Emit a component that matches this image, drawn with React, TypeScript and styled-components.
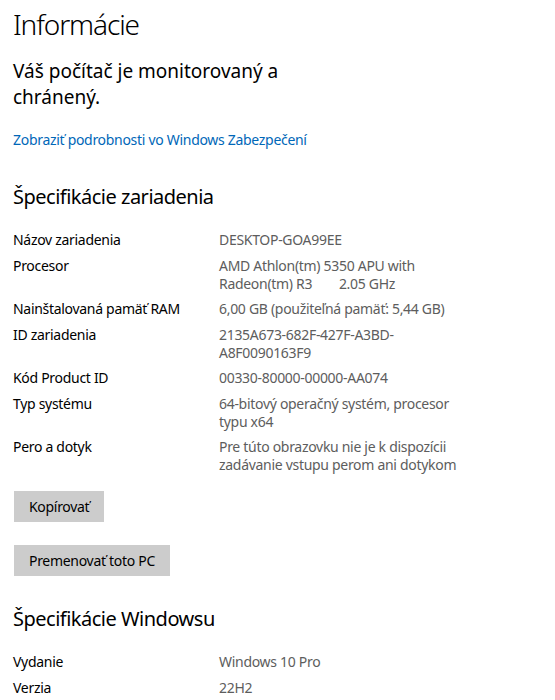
import styled, { createGlobalStyle } from 'styled-components';

const GlobalStyle = createGlobalStyle`
  html, body {
    margin: 0;
    padding: 0;
    background: #ffffff;
  }
  body {
    font-family: "Noto Sans", "Open Sans", "Liberation Sans", sans-serif;
    color: #000000;
  }
`;

const Page = styled.div`
  padding: 4px 13px 0 13px;
  width: 555px;
  height: 700px;
  box-sizing: border-box;
  overflow: hidden;
`;

const Title = styled.h1`
  margin: 0;
  font-size: 28px;
  font-weight: 300;
  line-height: 40px;
  letter-spacing: -1.1px;
`;

const Status = styled.div`
  margin-top: 14px;
  font-size: 19px;
  line-height: 26px;
  width: 300px;
`;

const Link = styled.a`
  display: block;
  margin-top: 20px;
  font-size: 14px;
  line-height: 20px;
  color: #0067b8;
  text-decoration: none;
  letter-spacing: -0.3px;
`;

const SectionTitle = styled.h2`
  margin: 0;
  font-size: 20px;
  font-weight: 400;
  line-height: 28px;
  letter-spacing: -0.5px;
`;

const Section = styled.section<{ $top: number }>`
  margin-top: ${p => p.$top}px;
`;

const SpecList = styled.div`
  margin-top: 20px;
  display: flex;
  flex-direction: column;
  gap: 7.5px;
`;

const SpecRow = styled.div`
  display: grid;
  grid-template-columns: 206px 1fr;
  font-size: 14px;
  line-height: 18px;
  letter-spacing: -0.3px;
`;

const SpecLabel = styled.div`
  color: #000000;
`;

const SpecValue = styled.div`
  color: #5d5d5d;
  white-space: pre;
`;

const Buttons = styled.div`
  margin-top: 17px;
  display: flex;
  flex-direction: column;
  align-items: flex-start;
  gap: 23px;
  padding-left: 1px;
`;

const Button = styled.button`
  font-family: inherit;
  font-size: 14px;
  letter-spacing: -0.3px;
  height: 31px;
  min-width: 90px;
  padding: 0 15px;
  border: none;
  background: #cccccc;
  color: #000000;
  cursor: pointer;
`;

type Spec = { label: string; value: string[] };

const deviceSpecs: Spec[] = [
  { label: 'Názov zariadenia', value: ['DESKTOP-GOA99EE'] },
  { label: 'Procesor', value: ['AMD Athlon(tm) 5350 APU with', 'Radeon(tm) R3        2.05 GHz'] },
  { label: 'Nainštalovaná pamäť RAM', value: ['6,00 GB (použiteľná pamäť: 5,44 GB)'] },
  { label: 'ID zariadenia', value: ['2135A673-682F-427F-A3BD-', 'A8F0090163F9'] },
  { label: 'Kód Product ID', value: ['00330-80000-00000-AA074'] },
  { label: 'Typ systému', value: ['64-bitový operačný systém, procesor', 'typu x64'] },
  { label: 'Pero a dotyk', value: ['Pre túto obrazovku nie je k dispozícii', 'zadávanie vstupu perom ani dotykom'] },
];

const windowsSpecs: Spec[] = [
  { label: 'Vydanie', value: ['Windows 10 Pro'] },
  { label: 'Verzia', value: ['22H2'] },
];

function SpecTable({ items }: { items: Spec[] }) {
  return (
    <SpecList>
      {items.map(item => (
        <SpecRow key={item.label}>
          <SpecLabel>{item.label}</SpecLabel>
          <SpecValue>{item.value.join('\n')}</SpecValue>
        </SpecRow>
      ))}
    </SpecList>
  );
}

export default function App() {
  return (
    <>
      <GlobalStyle />
      <Page>
        <Title>Informácie</Title>
        <Status>Váš počítač je monitorovaný a chránený.</Status>
        <Link href="#">Zobraziť podrobnosti vo Windows Zabezpečení</Link>

        <Section $top={33}>
          <SectionTitle>Špecifikácie zariadenia</SectionTitle>
          <SpecTable items={deviceSpecs} />
          <Buttons>
            <Button>Kopírovať</Button>
            <Button>Premenovať toto PC</Button>
          </Buttons>
        </Section>

        <Section $top={29}>
          <SectionTitle>Špecifikácie Windowsu</SectionTitle>
          <SpecTable items={windowsSpecs} />
        </Section>
      </Page>
    </>
  );
}
